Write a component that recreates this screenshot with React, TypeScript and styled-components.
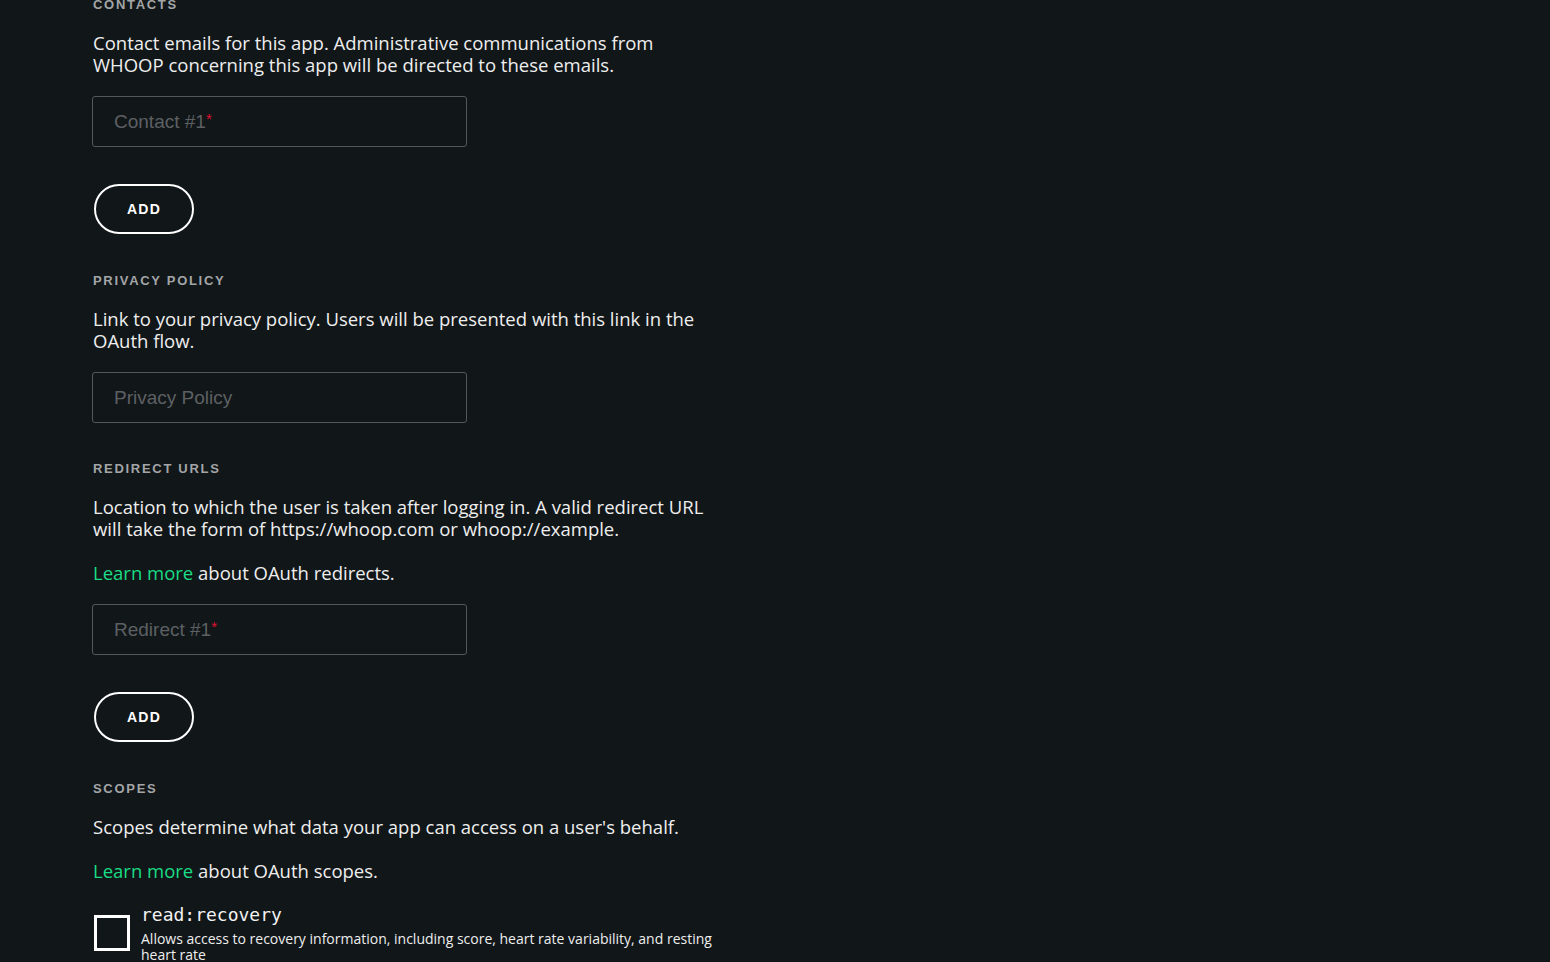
import React from "react";
import styled, { createGlobalStyle } from "styled-components";

const Global = createGlobalStyle`
  html, body { margin: 0; padding: 0; background: #111619; }
  body { font-family: "Open Sans", "Liberation Sans", Arial, sans-serif; color: #ececec; }
  * { box-sizing: border-box; }
`;

const Page = styled.main`
  width: 1550px;
  min-height: 962px;
  background: #111619;
  padding: 0 0 0 93px;
  overflow: hidden;
`;

const Column = styled.div`
  width: 625px;
  display: flex;
  flex-direction: column;
  margin-top: -3px;
`;

const Section = styled.section`
  display: flex;
  flex-direction: column;
  align-items: flex-start;
  margin-bottom: 38px;
`;

const Label = styled.h3`
  margin: 0 0 19px;
  font-family: "Liberation Sans", Arial, sans-serif;
  font-size: 13px;
  line-height: 16px;
  font-weight: 700;
  letter-spacing: 1.7px;
  text-transform: uppercase;
  color: #a3a5a7;
`;

const Text = styled.p`
  margin: 0 0 20px;
  font-size: 18.5px;
  line-height: 22px;
  color: #eeeeee;
  & + & {
    margin-top: 2px;
  }
`;

const Link = styled.a`
  color: #19dd84;
  text-decoration: none;
`;

const Field = styled.div`
  position: relative;
  width: 375px;
  height: 51px;
  margin-left: -1px;
  border: 1px solid #55585b;
  border-radius: 3px;
  display: flex;
  align-items: center;
  padding-left: 21px;
`;

const Placeholder = styled.span`
  font-family: "Liberation Sans", Arial, sans-serif;
  font-size: 19px;
  color: #5d6063;
`;

const Req = styled.span`
  color: #e0102f;
  font-size: 15px;
  vertical-align: 4px;
`;

const AddButton = styled.button`
  margin: 37px 0 1px 1px;
  width: 100px;
  height: 50px;
  border: 2px solid #ffffff;
  border-radius: 25px;
  background: transparent;
  color: #ffffff;
  font-family: "Liberation Sans", Arial, sans-serif;
  font-weight: 700;
  font-size: 14px;
  letter-spacing: 1.3px;
  cursor: pointer;
`;

const ScopeRow = styled.label`
  display: flex;
  align-items: center;
  gap: 11px;
  margin: 1px 0 0 1px;
`;

const Box = styled.span`
  flex: 0 0 auto;
  width: 36px;
  height: 36px;
  border: 3px solid #ffffff;
`;

const ScopeText = styled.div`
  display: flex;
  flex-direction: column;
  gap: 4px;
`;

const ScopeName = styled.code`
  font-family: "DejaVu Sans Mono", "Liberation Mono", monospace;
  font-size: 18px;
  line-height: 24px;
  color: #f2f2f2;
`;

const ScopeDesc = styled.span`
  font-size: 14px;
  line-height: 16px;
  color: #eeeeee;
`;

export default function App() {
  return (
    <Page>
      <Global />
      <Column>
        <Section>
          <Label>Contacts</Label>
          <Text>
            Contact emails for this app. Administrative communications from
            WHOOP concerning this app will be directed to these emails.
          </Text>
          <Field>
            <Placeholder>
              Contact #1<Req>*</Req>
            </Placeholder>
          </Field>
          <AddButton>ADD</AddButton>
        </Section>
        <Section>
          <Label>Privacy Policy</Label>
          <Text>
            Link to your privacy policy. Users will be presented with this link
            in the OAuth flow.
          </Text>
          <Field>
            <Placeholder>Privacy Policy</Placeholder>
          </Field>
        </Section>
        <Section>
          <Label>Redirect URLs</Label>
          <Text>
            Location to which the user is taken after logging in. A valid
            redirect URL will take the form of https://whoop.com or
            whoop://example.
          </Text>
          <Text>
            <Link href="#">Learn more</Link> about OAuth redirects.
          </Text>
          <Field>
            <Placeholder>
              Redirect #1<Req>*</Req>
            </Placeholder>
          </Field>
          <AddButton>ADD</AddButton>
        </Section>
        <Section>
          <Label>Scopes</Label>
          <Text>Scopes determine what data your app can access on a user's behalf.</Text>
          <Text>
            <Link href="#">Learn more</Link> about OAuth scopes.
          </Text>
          <ScopeRow>
            <Box />
            <ScopeText>
              <ScopeName>read:recovery</ScopeName>
              <ScopeDesc>
                Allows access to recovery information, including score, heart
                rate variability, and resting heart rate
              </ScopeDesc>
            </ScopeText>
          </ScopeRow>
        </Section>
      </Column>
    </Page>
  );
}
